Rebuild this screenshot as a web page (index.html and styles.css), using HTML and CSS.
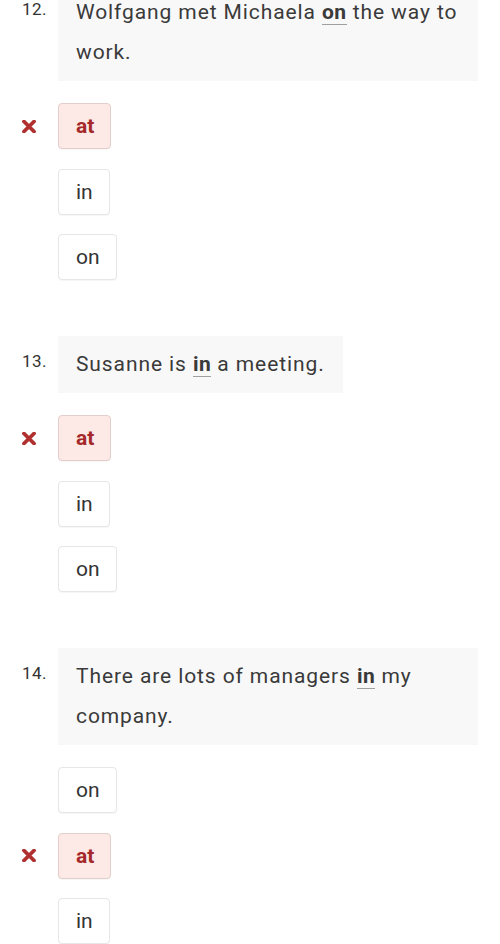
FILE: index.html
```html
<!DOCTYPE html>
<html lang="en">
<head>
<meta charset="utf-8">
<title>Prepositions quiz</title>
<link rel="stylesheet" href="styles.css">
</head>
<body>
<div class="quiz">
  <section class="q">
    <div class="q-head">
      <span class="num">12.</span>
      <p class="stem">Wolfgang met Michaela <b class="ans">on</b> the way to work.</p>
    </div>
    <ul class="opts">
      <li class="opt wrong"><span class="mark"><svg viewBox="0 0 14 13" width="14" height="13"><path d="M2 1.5 L12 11.5 M12 1.5 L2 11.5" stroke="#b0302f" stroke-width="3.8" stroke-linecap="round"/></svg></span><span class="btn">at</span></li>
      <li class="opt"><span class="mark"></span><span class="btn">in</span></li>
      <li class="opt"><span class="mark"></span><span class="btn">on</span></li>
    </ul>
  </section>
  <section class="q">
    <div class="q-head">
      <span class="num">13.</span>
      <p class="stem">Susanne is <b class="ans">in</b> a meeting.</p>
    </div>
    <ul class="opts">
      <li class="opt wrong"><span class="mark"><svg viewBox="0 0 14 13" width="14" height="13"><path d="M2 1.5 L12 11.5 M12 1.5 L2 11.5" stroke="#b0302f" stroke-width="3.8" stroke-linecap="round"/></svg></span><span class="btn">at</span></li>
      <li class="opt"><span class="mark"></span><span class="btn">in</span></li>
      <li class="opt"><span class="mark"></span><span class="btn">on</span></li>
    </ul>
  </section>
  <section class="q">
    <div class="q-head">
      <span class="num">14.</span>
      <p class="stem">There are lots of managers <b class="ans">in</b> my company.</p>
    </div>
    <ul class="opts">
      <li class="opt"><span class="mark"></span><span class="btn">on</span></li>
      <li class="opt wrong"><span class="mark"><svg viewBox="0 0 14 13" width="14" height="13"><path d="M2 1.5 L12 11.5 M12 1.5 L2 11.5" stroke="#b0302f" stroke-width="3.8" stroke-linecap="round"/></svg></span><span class="btn">at</span></li>
      <li class="opt"><span class="mark"></span><span class="btn">in</span></li>
    </ul>
  </section>
</div>
</body>
</html>
```

FILE: styles.css
```css
html, body {
  margin: 0;
  padding: 0;
  background: #ffffff;
}

body {
  font-family: Roboto, "Liberation Sans", sans-serif;
  color: #333333;
  overflow: hidden;
}

.quiz {
  margin-top: -16px;
}

.q + .q {
  margin-top: 56px;
}

.q-head {
  display: flex;
  align-items: flex-start;
  padding-left: 22px;
}

.num {
  flex: 0 0 36px;
  font-size: 17px;
  letter-spacing: 0.4px;
  line-height: 40px;
  padding-top: 5px;
  color: #333333;
}

.stem {
  margin: 0;
  max-width: 420px;
  box-sizing: border-box;
  background: #f8f8f8;
  padding: 8px 18px 9px 18px;
  font-size: 21px;
  letter-spacing: 0.9px;
  line-height: 40px;
  color: #3a3a3a;
}

.ans {
  font-weight: 700;
  letter-spacing: 0.5px;
  border-bottom: 1px solid #a0a0a0;
}

.opts {
  list-style: none;
  margin: 22px 0 0 0;
  padding: 0 0 0 22px;
  display: flex;
  flex-direction: column;
  align-items: flex-start;
  gap: 19.5px;
}

.opt {
  display: flex;
  align-items: center;
}

.mark {
  flex: 0 0 36px;
  display: flex;
  align-items: center;
}

.btn {
  display: block;
  box-sizing: border-box;
  height: 46px;
  padding: 10px 16px 10px 17px;
  font-size: 21px;
  letter-spacing: 0;
  line-height: 24px;
  color: #333333;
  background: #ffffff;
  border: 1px solid #e6e6e6;
  border-radius: 4px;
  box-shadow: 0 1px 1px rgba(0, 0, 0, 0.04);
}

.wrong .btn {
  background: #fde9e5;
  border-color: #e2cfcc;
  color: #a5292b;
  font-weight: 700;
}
```
